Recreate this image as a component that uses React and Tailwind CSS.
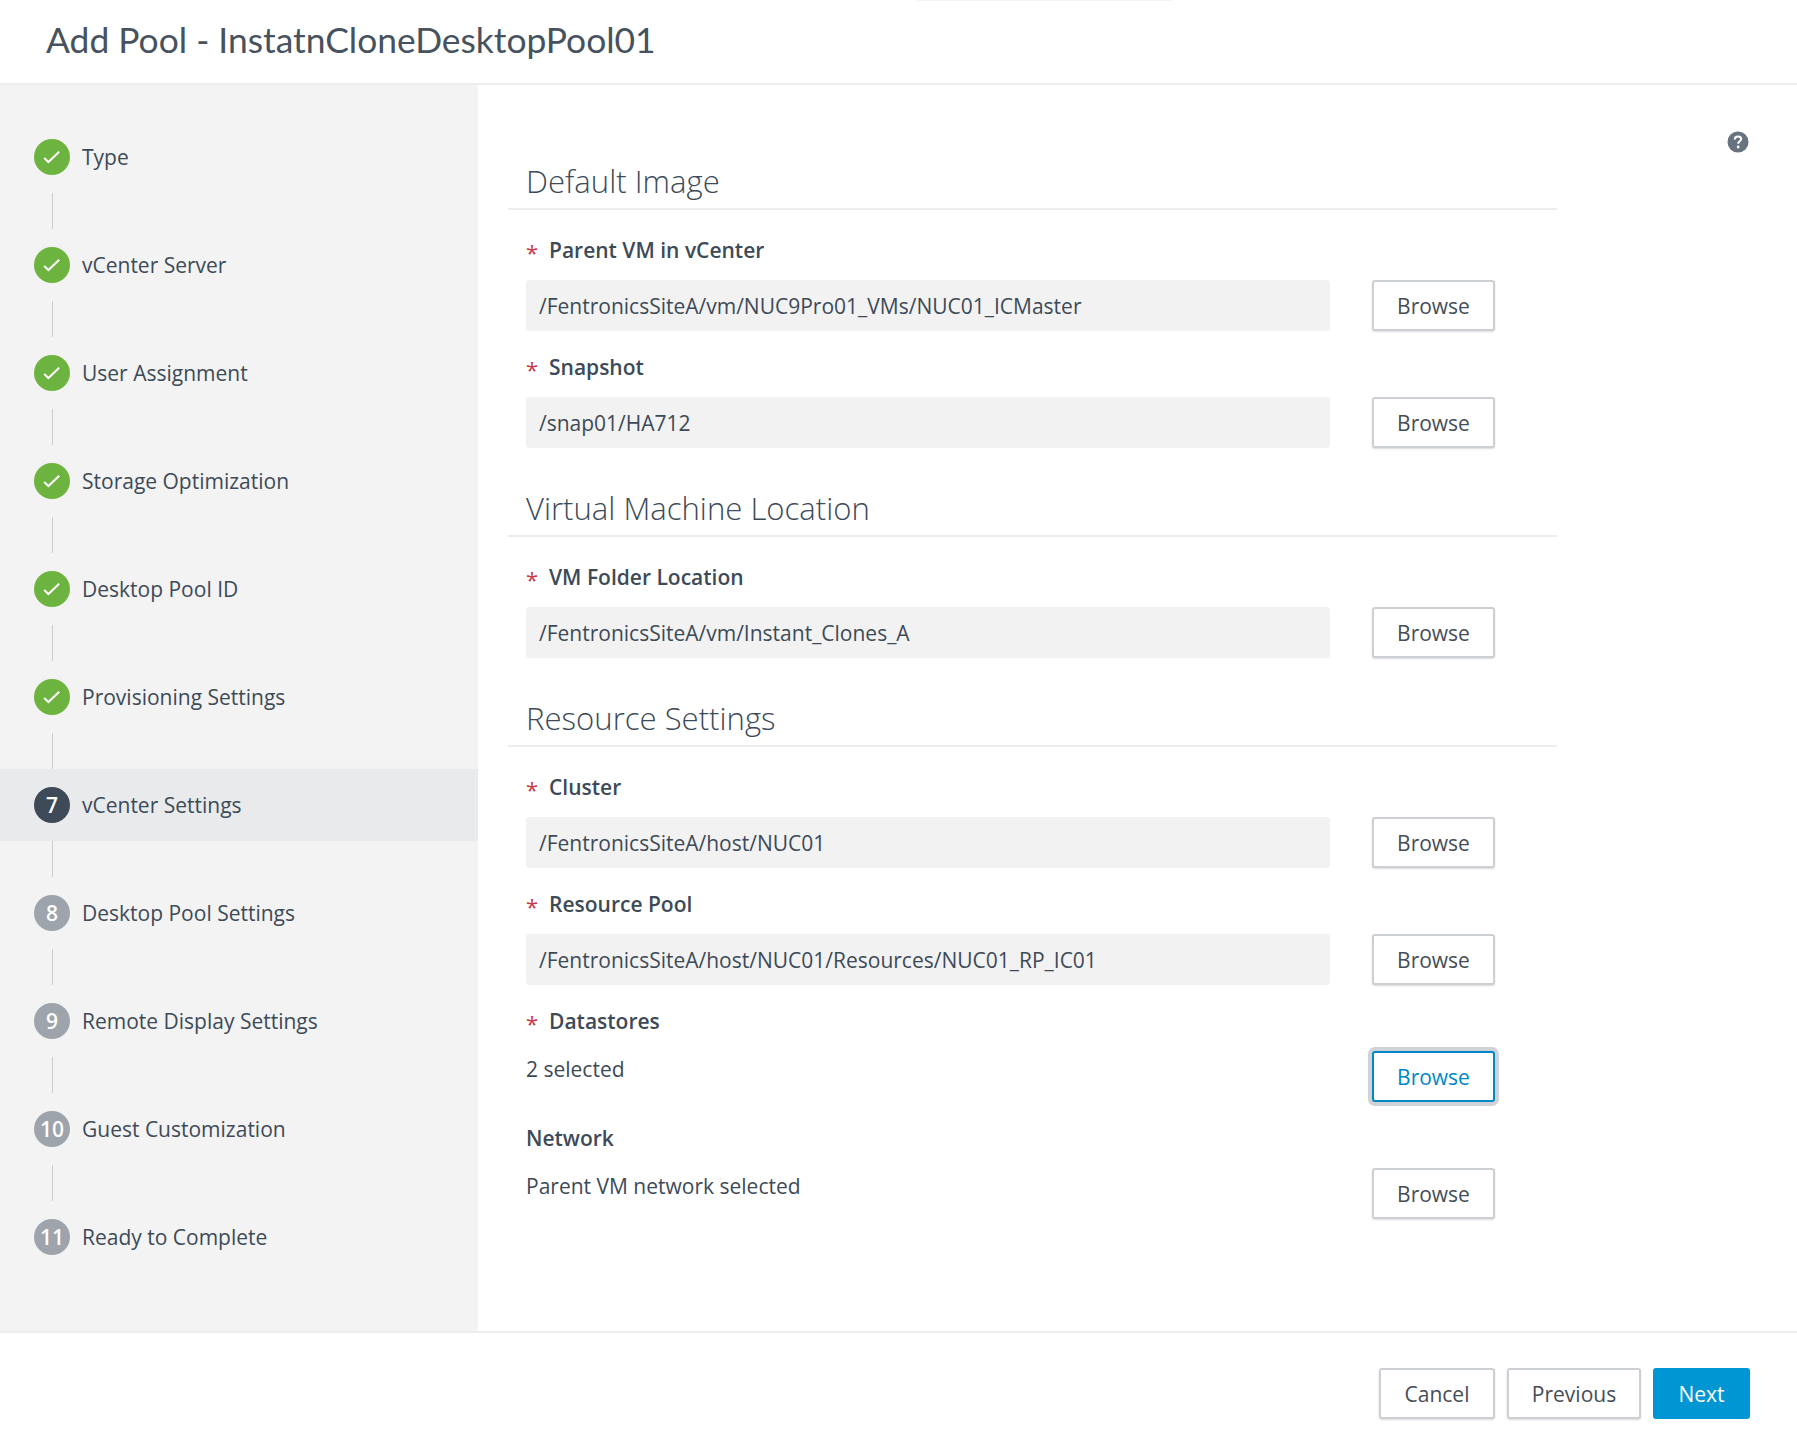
const OS = "font-['Open_Sans',sans-serif]";

const steps = [
  { n: 'Type', s: 'done' },
  { n: 'vCenter Server', s: 'done' },
  { n: 'User Assignment', s: 'done' },
  { n: 'Storage Optimization', s: 'done' },
  { n: 'Desktop Pool ID', s: 'done' },
  { n: 'Provisioning Settings', s: 'done' },
  { n: 'vCenter Settings', s: 'current', k: 7 },
  { n: 'Desktop Pool Settings', s: 'todo', k: 8 },
  { n: 'Remote Display Settings', s: 'todo', k: 9 },
  { n: 'Guest Customization', s: 'todo', k: 10 },
  { n: 'Ready to Complete', s: 'todo', k: 11 },
];

function Check() {
  return (
    <svg width="18" height="18" viewBox="0 0 18 18" fill="none">
      <path d="M1.2 10 L5.4 14 L16.2 3.8" stroke="#fff" strokeWidth="2" />
    </svg>
  );
}

function Step({ step, last }) {
  return (
    <>
      <div className={`flex h-[72px] shrink-0 items-center pl-[34px] ${step.s === 'current' ? 'bg-[#e9eaec]' : ''}`}>
        {step.s === 'done' && (
          <div className="flex h-[36px] w-[36px] items-center justify-center rounded-full bg-[#6db33f]">
            <Check />
          </div>
        )}
        {step.s === 'current' && (
          <div className="flex h-[36px] w-[36px] items-center justify-center rounded-full bg-[#3e4a58] pt-[1px] text-[21px] font-semibold text-white">
            {step.k}
          </div>
        )}
        {step.s === 'todo' && (
          <div className="flex h-[36px] w-[36px] items-center justify-center rounded-full bg-[#9ea4ab] pt-[1px] text-[21px] font-semibold text-white">
            {step.k}
          </div>
        )}
        <span className="ml-[12px] pt-[1px] text-[21px] text-[#3d4a57]">{step.n}</span>
      </div>
      {!last && <div className="ml-[52px] h-[36px] w-[1px] shrink-0 bg-[#cccccc]" />}
    </>
  );
}

function Btn({ children, className = 'w-[123px]' }) {
  return (
    <button className={`flex h-[51px] shrink-0 items-center justify-center rounded-[3px] border-2 border-[#ccd0d4] bg-white pt-[2px] text-[21px] text-[#454d57] shadow-[0_1px_2px_rgba(0,0,0,0.15)] ${className}`}>
      {children}
    </button>
  );
}

function Section({ title, className = '' }) {
  return (
    <div className={`h-[48px] border-b-2 border-[#ececec] pl-[18px] ${className}`}>
      <h2 className="text-[31.1px] font-[350] leading-[38px] text-[#3d4a57]">{title}</h2>
    </div>
  );
}

function Label({ text, required = true, className = '' }) {
  return (
    <div className={`flex h-[30px] items-center pl-[18px] ${className}`}>
      {required && <span className="w-[23px] pt-[4px] text-[22px] leading-[30px] text-[#c9374a]">*</span>}
      <span className="pt-[1px] text-[21px] font-semibold text-[#3d4a57]">{text}</span>
    </div>
  );
}

function Field({ value }) {
  return (
    <div className="flex h-[51px] gap-[42px] pl-[18px]">
      <div className="flex w-[804px] items-center rounded-[3px] bg-[#f2f2f3] pl-[13px] pt-[2px] text-[21px] text-[#3d4a57]">
        {value}
      </div>
      <Btn>Browse</Btn>
    </div>
  );
}

function Plain({ value, focus }) {
  return (
    <div className="flex h-[51px] gap-[42px] pl-[18px]">
      <div className="w-[804px] pt-[3px] text-[21px] leading-[30px] text-[#3d4a57]">{value}</div>
      {focus ? (
        <button className="flex h-[51px] w-[123px] shrink-0 items-center justify-center rounded-[3px] border-2 border-[#0088c6] bg-white pt-[2px] text-[21px] text-[#0088c6] shadow-[0_0_0_4px_#cfd2d6]">
          Browse
        </button>
      ) : (
        <Btn>Browse</Btn>
      )}
    </div>
  );
}

export default function App() {
  return (
    <div className={`flex h-[1452px] w-[1797px] flex-col overflow-hidden bg-white ${OS}`}>
      <header className="relative flex h-[85px] shrink-0 items-center border-b-2 border-[#eeeeee] pb-[3px] pl-[46px]">
        <div className="absolute left-[917px] top-0 h-[1px] w-[256px] bg-[#f3f4f7]" />
        <h1 className="font-['Lato',sans-serif] text-[35.4px] font-normal text-[#46525e]">
          Add Pool - InstatnCloneDesktopPool01
        </h1>
      </header>
      <div className="flex min-h-0 flex-1">
        <aside className="w-[478px] shrink-0 bg-[#f3f3f3] pt-[36px]">
          {steps.map((s, i) => (
            <Step key={s.n} step={s} last={i === steps.length - 1} />
          ))}
        </aside>
        <main className="relative flex-1 pl-[30px] pt-[77px]">
          <svg className="absolute left-[1249px] top-[46px]" width="22" height="22" viewBox="0 0 22 22">
            <circle cx="11" cy="11" r="10.5" fill="#697380" />
            <path d="M7.8 8.4 C7.8 6.4 9.3 5.4 11 5.4 C12.9 5.4 14.2 6.5 14.2 8.1 C14.2 10.3 11.2 10.4 11.2 12.8" fill="none" stroke="#fff" strokeWidth="2" />
            <circle cx="11.2" cy="16" r="1.4" fill="#fff" />
          </svg>
          <div className="w-[1049px]">
            <Section title="Default Image" />
            <Label text="Parent VM in vCenter" className="mt-[25px] mb-[15px]" />
            <Field value="/FentronicsSiteA/vm/NUC9Pro01_VMs/NUC01_ICMaster" />
            <Label text="Snapshot" className="mt-[21px] mb-[15px]" />
            <Field value="/snap01/HA712" />
            <Section title="Virtual Machine Location" className="mt-[41px]" />
            <Label text="VM Folder Location" className="mt-[25px] mb-[15px]" />
            <Field value="/FentronicsSiteA/vm/Instant_Clones_A" />
            <Section title="Resource Settings" className="mt-[41px]" />
            <Label text="Cluster" className="mt-[25px] mb-[15px]" />
            <Field value="/FentronicsSiteA/host/NUC01" />
            <Label text="Resource Pool" className="mt-[21px] mb-[15px]" />
            <Field value="/FentronicsSiteA/host/NUC01/Resources/NUC01_RP_IC01" />
            <Label text="Datastores" className="mt-[21px] mb-[15px]" />
            <Plain value="2 selected" focus />
            <Label text="Network" required={false} className="mt-[21px] mb-[15px]" />
            <Plain value="Parent VM network selected" />
          </div>
        </main>
      </div>
      <footer className="flex h-[121px] shrink-0 justify-end gap-[12px] border-t-2 border-[#eeeeee] pr-[47px] pt-[35px]">
        <Btn className="w-[116px]">Cancel</Btn>
        <Btn className="w-[134px]">Previous</Btn>
        <button className="flex h-[51px] w-[97px] items-center justify-center rounded-[3px] bg-[#0095d3] pt-[2px] text-[21px] text-white">
          Next
        </button>
      </footer>
    </div>
  );
}
